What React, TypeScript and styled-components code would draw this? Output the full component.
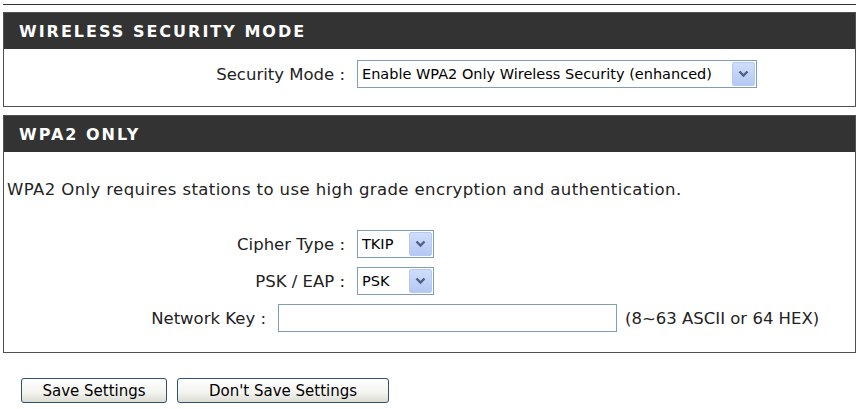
import * as React from "react";
import styled, { createGlobalStyle } from "styled-components";

const GlobalStyle = createGlobalStyle`
    html, body {
        margin: 0;
        padding: 0;
        background: #ffffff;
    }
    body {
        font-family: "DejaVu Sans", Verdana, sans-serif;
        color: #000000;
    }
`;

const Page = styled.div`
    width: 853px;
    padding: 4px 3px 0 3px;
`;

const TopRule = styled.div`
    border-top: 1px solid #333333;
    margin-bottom: 7px;
`;

const Panel = styled.div`
    border: 1px solid #505050;
    margin-bottom: 8px;
`;

const PanelHeader = styled.div`
    height: 36px;
    background: #333333;
    color: #ffffff;
    display: flex;
    align-items: center;
    padding-left: 15px;
    font-family: "DejaVu Sans", Verdana, sans-serif;
    font-weight: bold;
    font-size: 16px;
    letter-spacing: 2px;
`;

const PanelBody = styled.div<{ $pad: string }>`
    padding: ${props => props.$pad};
    display: flex;
    flex-direction: column;
    gap: 9px;
`;

const Description = styled.p`
    margin: 0 0 21px 0;
    padding-left: 3px;
    font-size: 16.5px;
    line-height: 20px;
    letter-spacing: 0.4px;
    color: #222222;
`;

const Row = styled.div`
    display: flex;
    align-items: center;
    height: 28px;
    gap: 12px;
`;

const Label = styled.span<{ $width: number }>`
    width: ${props => props.$width}px;
    text-align: right;
    font-size: 16.5px;
    color: #222222;
    white-space: nowrap;
`;

const SelectBox = styled.div<{ $width: number }>`
    width: ${props => props.$width}px;
    height: 28px;
    box-sizing: border-box;
    border: 1px solid #7f9db9;
    background: #ffffff;
    display: flex;
    align-items: center;
    justify-content: space-between;
    padding: 1px 1px 1px 4px;
`;

const SelectValue = styled.span`
    font-size: 14.5px;
    color: #000000;
    white-space: nowrap;
`;

const ArrowButton = styled.span`
    width: 23px;
    height: 24px;
    box-sizing: border-box;
    border: 1px solid #b7c9f2;
    border-radius: 2px;
    background: linear-gradient(#d0ddfb, #b4c8f4);
    display: flex;
    align-items: center;
    justify-content: center;
`;

const TextInput = styled.div`
    width: 339px;
    height: 28px;
    box-sizing: border-box;
    border: 1px solid #7f9db9;
    background: #ffffff;
`;

const Hint = styled.span`
    margin-left: -4px;
    font-size: 16.5px;
    color: #222222;
    white-space: nowrap;
`;

const ButtonRow = styled.div`
    display: flex;
    gap: 10px;
    margin-top: 25px;
    padding-left: 18px;
`;

const Button = styled.button<{ $width: number }>`
    width: ${props => props.$width}px;
    height: 25px;
    border: 1px solid #2f4f74;
    border-radius: 3px;
    background: linear-gradient(#ffffff 0%, #f3f3ef 60%, #dcdcd4 100%);
    font-family: "DejaVu Sans", Verdana, sans-serif;
    font-size: 15px;
    color: #000000;
    padding: 0;
`;

const Chevron = () => (
    <svg width="11" height="8" viewBox="0 0 11 8">
        <path d="M1.5 1.5 L5.5 5.5 L9.5 1.5" fill="none" stroke="#4d6185" strokeWidth="2.4"/>
    </svg>
);

const Select = ({ width, value }: { width: number; value: string }) => (
    <SelectBox $width={width}>
        <SelectValue>{value}</SelectValue>
        <ArrowButton><Chevron/></ArrowButton>
    </SelectBox>
);

export default function App() {
    return <>
        <GlobalStyle/>
        <Page>
            <TopRule/>
            <Panel>
                <PanelHeader>WIRELESS SECURITY MODE</PanelHeader>
                <PanelBody $pad="11px 0 18px 0">
                    <Row>
                        <Label $width={341}>Security Mode :</Label>
                        <Select width={400} value="Enable WPA2 Only Wireless Security (enhanced)"/>
                    </Row>
                </PanelBody>
            </Panel>
            <Panel>
                <PanelHeader>WPA2 ONLY</PanelHeader>
                <PanelBody $pad="28px 0 20px 0">
                    <Description>
                        WPA2 Only requires stations to use high grade encryption and authentication.
                    </Description>
                    <Row>
                        <Label $width={341}>Cipher Type :</Label>
                        <Select width={77} value="TKIP"/>
                    </Row>
                    <Row>
                        <Label $width={341}>PSK / EAP :</Label>
                        <Select width={77} value="PSK"/>
                    </Row>
                    <Row>
                        <Label $width={262}>Network Key :</Label>
                        <TextInput/>
                        <Hint>(8~63 ASCII or 64 HEX)</Hint>
                    </Row>
                </PanelBody>
            </Panel>
            <ButtonRow>
                <Button $width={146}>Save Settings</Button>
                <Button $width={212}>Don't Save Settings</Button>
            </ButtonRow>
        </Page>
    </>;
}
